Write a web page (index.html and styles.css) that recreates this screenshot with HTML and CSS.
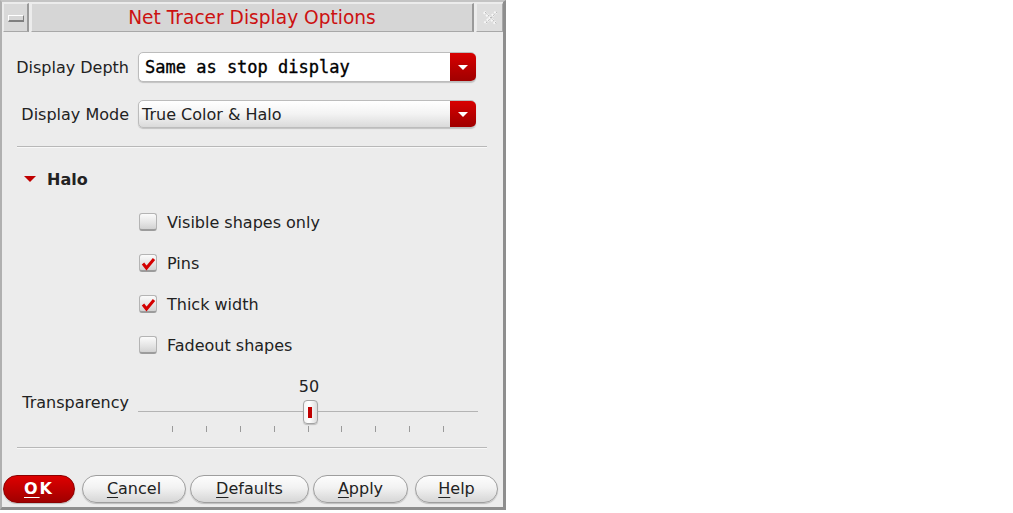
FILE: index.html
```html
<!DOCTYPE html>
<html>
<head>
<meta charset="utf-8">
<title>Net Tracer Display Options</title>
<link rel="stylesheet" href="styles.css">
</head>
<body>
<div class="window">
  <div class="titlebar">
    <div class="tb-btn tb-min"><span class="min-icon"></span></div>
    <div class="tb-title">Net Tracer Display Options</div>
    <div class="tb-btn tb-close">
      <svg width="16" height="16" viewBox="0 0 16 16">
        <path d="M2 2 L14 14 M14 2 L2 14" stroke="#f7f7f7" stroke-width="3" stroke-dasharray="2 1.5" fill="none"/>
        <path d="M3 2 L15 14 M15 2 L3 14" stroke="#bcbcbc" stroke-width="1" stroke-dasharray="2 1.5" fill="none"/>
      </svg>
    </div>
  </div>
  <div class="content">
    <div class="form-row row-depth">
      <span class="lbl">Display Depth</span>
      <div class="combo combo-entry">
        <span class="combo-text mono">Same as stop display</span>
        <span class="drop"><span class="drop-arrow"></span></span>
      </div>
    </div>
    <div class="form-row row-mode">
      <span class="lbl">Display Mode</span>
      <div class="combo combo-btn">
        <span class="combo-text">True Color &amp; Halo</span>
        <span class="drop"><span class="drop-arrow"></span></span>
      </div>
    </div>
    <div class="sep sep-top"></div>
    <div class="section-head"><span class="tri"></span><span class="section-title">Halo</span></div>
    <div class="checks">
      <div class="check"><span class="box"></span><span>Visible shapes only</span></div>
      <div class="check"><span class="box checked"><svg width="18" height="18" viewBox="0 0 18 18"><path d="M4 9.5 L7.5 14 L15 5" stroke="#d40000" stroke-width="3" fill="none" stroke-linejoin="miter"/></svg></span><span>Pins</span></div>
      <div class="check"><span class="box checked"><svg width="18" height="18" viewBox="0 0 18 18"><path d="M4 9.5 L7.5 14 L15 5" stroke="#d40000" stroke-width="3" fill="none" stroke-linejoin="miter"/></svg></span><span>Thick width</span></div>
      <div class="check"><span class="box"></span><span>Fadeout shapes</span></div>
    </div>
    <div class="form-row row-slider">
      <span class="lbl lbl-slider">Transparency</span>
      <div class="slider">
        <div class="slider-value">50</div>
        <div class="track">
          <div class="track-line"></div>
          <div class="thumb"><span class="thumb-mark"></span></div>
        </div>
        <div class="ticks">
          <span></span><span></span><span></span><span></span><span></span><span></span><span></span><span></span><span></span>
        </div>
      </div>
    </div>
    <div class="sep sep-bottom"></div>
    <div class="buttons">
      <button class="btn btn-ok"><u>O</u>K</button>
      <button class="btn btn-cancel"><u>C</u>ancel</button>
      <button class="btn btn-defaults"><u>D</u>efaults</button>
      <button class="btn btn-apply"><u>A</u>pply</button>
      <button class="btn btn-help"><u>H</u>elp</button>
    </div>
  </div>
</div>
</body>
</html>
```

FILE: styles.css
```css
* { box-sizing: border-box; }

body {
  margin: 0;
  background: #ffffff;
  font-family: "DejaVu Sans", "Liberation Sans", sans-serif;
  font-size: 16px;
  color: #222222;
}

.window {
  width: 506px;
  height: 510px;
  background: #ececec;
  border-left: 2px solid #b0b0b0;
  border-top: 2px solid #c4c4c4;
  border-right: 3px solid #8e8e8e;
  border-bottom: 3px solid #8e8e8e;
  display: flex;
  flex-direction: column;
}

/* title bar */
.titlebar {
  display: flex;
  height: 29px;
  margin: 1px 0 0 1px;
  gap: 2px;
}

.tb-btn {
  width: 26px;
  background: #d9d9d9;
  border-top: 1px solid #ececec;
  border-left: 1px solid #ececec;
  border-right: 2px solid #9a9a9a;
  border-bottom: 1px solid #a8a8a8;
  display: flex;
  align-items: center;
  justify-content: center;
}

.tb-close {
  width: 27px;
  background: #dedede;
  border-right: 1px solid #a8a8a8;
}

.min-icon {
  width: 16px;
  height: 7px;
  background: #d6d6d6;
  border-top: 1px solid #ffffff;
  border-left: 1px solid #ffffff;
  border-right: 1px solid #808080;
  border-bottom: 2px solid #808080;
  margin-top: 1px;
}

.tb-title {
  flex: 1;
  background: #d6d6d6;
  border-top: 1px solid #ececec;
  border-left: 1px solid #ececec;
  border-right: 2px solid #9a9a9a;
  border-bottom: 1px solid #a8a8a8;
  color: #cc1111;
  font-size: 18.6px;
  line-height: 27px;
  text-align: center;
}

/* form */
.content {
  display: flex;
  flex-direction: column;
}

.form-row {
  display: grid;
  grid-template-columns: 127px 338px;
  column-gap: 9px;
  align-items: center;
}

.lbl {
  text-align: right;
  white-space: nowrap;
}

.row-depth { margin-top: 20px; }
.row-mode { margin-top: 18px; }

.combo {
  display: flex;
  align-items: stretch;
  border: 1px solid #bcbcbc;
  border-radius: 5px;
  box-shadow: 0 1px 1px rgba(0, 0, 0, 0.18);
}

.combo-entry {
  height: 30px;
  background: #ffffff;
}

.combo-btn {
  height: 28px;
  background: linear-gradient(#ffffff, #f3f3f3 50%, #dadada);
}

.combo-text {
  flex: 1;
  display: flex;
  align-items: center;
  padding-left: 3px;
  white-space: nowrap;
}

.mono {
  font-family: "DejaVu Sans Mono", "Liberation Mono", monospace;
  font-size: 17px;
  font-weight: normal;
  padding-left: 6px;
  color: #000000;
  -webkit-text-stroke: 0.35px #000000;
}

.drop {
  width: 26px;
  margin: 0 -1px 0 0;
  background: linear-gradient(#d80000, #b50000 60%, #a00000);
  border-radius: 0 5px 5px 0;
  display: flex;
  align-items: center;
  justify-content: center;
}

.drop-arrow {
  width: 0;
  height: 0;
  border-left: 5px solid transparent;
  border-right: 5px solid transparent;
  border-top: 5px solid #ffffff;
}

.sep {
  height: 1px;
  background: #b8b8b8;
  margin-left: 15px;
  width: 470px;
  box-shadow: 0 1px 0 #f8f8f8;
}

.sep-top { margin-top: 18px; }

.section-head {
  display: flex;
  align-items: center;
  height: 20px;
  margin-top: 22px;
  padding-left: 22px;
  gap: 11px;
}

.tri {
  width: 0;
  height: 0;
  border-left: 6px solid transparent;
  border-right: 6px solid transparent;
  border-top: 6px solid #c00000;
}

.section-title {
  font-weight: bold;
}

.checks {
  display: flex;
  flex-direction: column;
  gap: 19px;
  margin-top: 22px;
  padding-left: 137px;
}

.check {
  display: flex;
  align-items: center;
  height: 22px;
  gap: 10px;
}

.box {
  width: 18px;
  height: 18px;
  border: 1px solid #b4b4b4;
  border-bottom: 2px solid #9c9c9c;
  border-radius: 3px;
  background: linear-gradient(#fbfbfb, #e4e4e4 60%, #d2d2d2);
  position: relative;
}

.box svg {
  position: absolute;
  left: -1px;
  top: -1px;
}

/* slider */
.row-slider {
  margin-top: 21px;
  align-items: start;
}

.lbl-slider {
  padding-top: 16px;
  line-height: 20px;
}

.slider {
  display: flex;
  flex-direction: column;
  width: 340px;
}

.slider-value {
  line-height: 20px;
  height: 20px;
  text-align: center;
  padding-left: 2px;
}

.track {
  margin-top: 3px;
  height: 24px;
  display: flex;
  align-items: center;
  justify-content: center;
  position: relative;
}

.track-line {
  position: absolute;
  left: 0;
  right: 0;
  top: 11px;
  height: 1px;
  background: #b4b4b4;
}

.thumb {
  position: relative;
  width: 15px;
  height: 24px;
  margin-left: 4px;
  border: 1px solid #a4a4a4;
  border-radius: 4px;
  background: linear-gradient(90deg, #f4f4f4, #ffffff 40%, #dcdcdc);
  box-shadow: 0 1px 1px rgba(0, 0, 0, 0.2);
  display: flex;
  align-items: center;
  justify-content: center;
}

.thumb-mark {
  width: 4px;
  height: 11px;
  background: #c00000;
}

.ticks {
  display: flex;
  justify-content: space-between;
  margin-top: 2px;
  padding: 0 34px;
  height: 6px;
}

.ticks span {
  width: 1px;
  height: 6px;
  background: #9a9a9a;
}

.sep-bottom { margin-top: 15px; }

/* buttons */
.buttons {
  display: flex;
  margin-top: 27px;
  padding-left: 1px;
}

.btn {
  height: 28px;
  border: 1px solid #9e9e9e;
  border-radius: 14px;
  background: linear-gradient(#fdfdfd, #f2f2f2 45%, #d6d6d6);
  box-shadow: 0 1px 1px rgba(0, 0, 0, 0.2);
  font-family: "DejaVu Sans", "Liberation Sans", sans-serif;
  font-size: 16px;
  color: #222222;
  padding: 0;
  line-height: 26px;
  text-align: center;
}

.btn u { text-underline-offset: 3px; }

.btn-ok {
  width: 72px;
  background: linear-gradient(#de0000, #c00000 50%, #a00000);
  border-color: #8c0000;
  color: #ffffff;
  font-weight: bold;
  letter-spacing: 2px;
}

.btn-cancel { width: 104px; margin-left: 7px; }
.btn-defaults { width: 119px; margin-left: 4px; }
.btn-apply { width: 95px; margin-left: 4px; }
.btn-help { width: 83px; margin-left: 7px; }
```
